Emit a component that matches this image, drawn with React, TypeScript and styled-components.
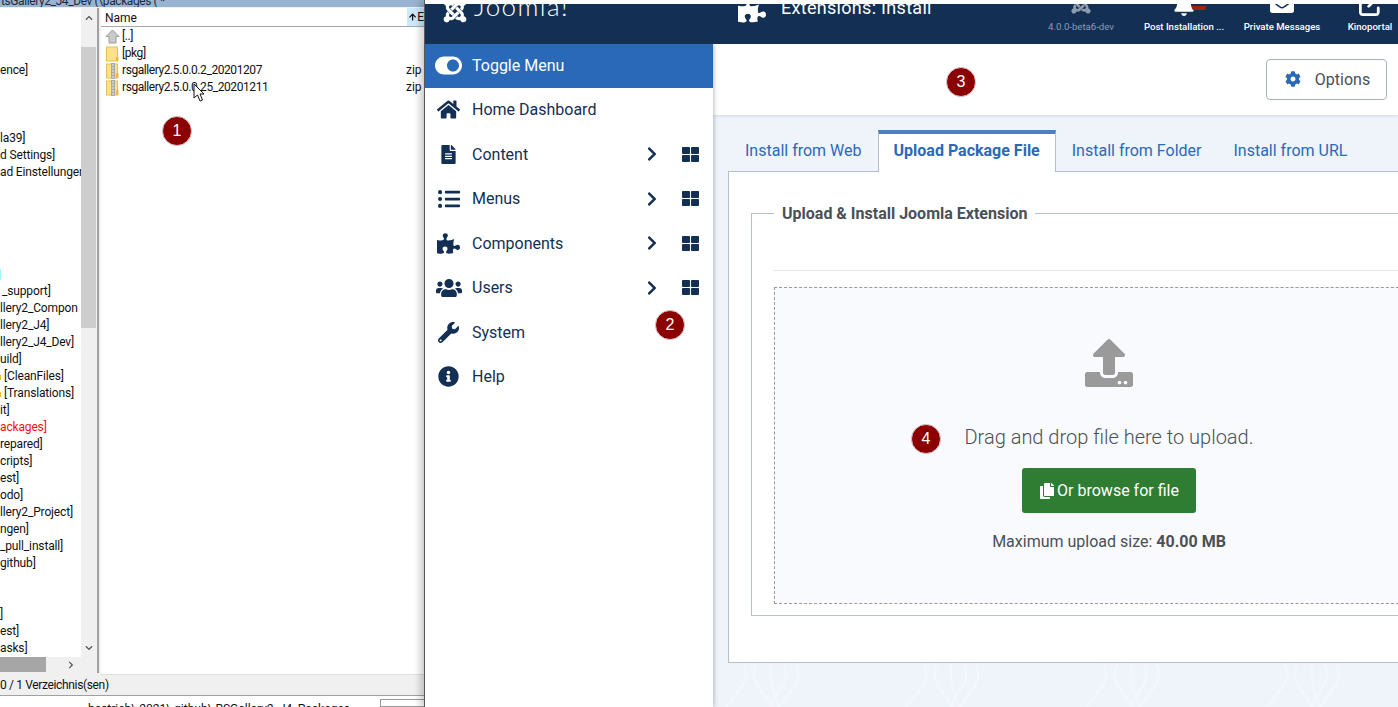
import React from "react"
import styled, { createGlobalStyle } from "styled-components"
import {
    FaArrowUp, FaBell, FaChevronRight, FaCog, FaCopy, FaEnvelopeOpen, FaFileAlt, FaHome, FaInfoCircle, FaJoomla,
    FaListUl, FaPuzzlePiece, FaThLarge, FaToggleOn, FaUpload, FaUsers, FaWrench,
} from "react-icons/fa"
import { FaArrowUpRightFromSquare } from "react-icons/fa6"

const Global = createGlobalStyle`
    html, body { margin: 0; padding: 0; height: 100%; overflow: hidden; background: #fff; }
    * { box-sizing: border-box; }
    ul { list-style: none; margin: 0; padding: 0; }
`

const Screen = styled.div`
    position: relative;
    display: flex;
    width: 1398px;
    height: 707px;
    overflow: hidden;
`

/* ---- file manager window ---- */

const Commander = styled.div`
    width: 424px;
    flex: none;
    display: flex;
    flex-direction: column;
    font-family: Roboto, "Open Sans", sans-serif;
    font-size: 12px;
    color: #111;
    background: #f0f0f0;
`

const TitleBar = styled.div`
    height: 7px;
    background: #99b4d1;
    overflow: hidden;
    line-height: 2px;
    padding-left: 1px;
    letter-spacing: -0.4px;
    white-space: nowrap;
    color: #1c2a3a;
`

const Panes = styled.div`
    display: flex;
    margin-top: 1px;
    height: 668px;
`

const TreePane = styled.div`
    width: 99px;
    flex: none;
    display: grid;
    grid-template-columns: 81px 15px;
    grid-template-rows: 649px 15px;
    border-right: 2px solid #a0a0a0;
    background: #f0f0f0;
    height: 665px;
`

const TreeList = styled.ul`
    background: #fff;
    overflow: hidden;
    padding-top: 20px;
`

const TreeRow = styled.li<{ $red?: boolean; $x?: number }>`
    height: 17px;
    line-height: 17px;
    white-space: nowrap;
    letter-spacing: -0.15px;
    padding-left: ${p => p.$x ?? 0}px;
    color: ${p => (p.$red ? "#f01010" : "#111")};
`

const CyanMark = styled.span`
    display: inline-block;
    width: 1px;
    height: 11px;
    vertical-align: middle;
    background: #9ff5ff;
`

const FolderStub = styled.span`
    display: inline-block;
    width: 1px;
    height: 5px;
    margin-right: 3px;
    vertical-align: baseline;
    background: #eeb92f;
`

const VScroll = styled.div`
    display: flex;
    flex-direction: column;
    align-items: center;
    background: #f0f0f0;
    color: #555;
`

const ScrollArrow = styled.div<{ $h: number }>`
    height: ${p => p.$h}px;
    flex: none;
    display: flex;
    align-items: center;
    justify-content: center;
`

const VThumb = styled.div`
    width: 100%;
    height: 281px;
    background: #cdcdcd;
    flex: none;
`

const HScroll = styled.div`
    display: flex;
    align-items: center;
    background: #f0f0f0;
    color: #555;
`

const HThumb = styled.div`
    width: 46px;
    height: 100%;
    background: #a6a6a6;
`

const HArrow = styled.div`
    margin-left: 21px;
    display: flex;
`

const ListPane = styled.div`
    flex: 1;
    margin-left: 2px;
    background: #fff;
    min-width: 0;
    height: 667px;
    border-bottom: 1px solid #e0e0e0;
`

const ListHeader = styled.div`
    height: 19px;
    display: flex;
    border-bottom: 1px solid #a8a8a8;
    line-height: 19px;
`

const NameCol = styled.div`
    flex: 1;
    padding: 1px 0 0 4px;
`

const SortCol = styled.div`
    width: 17px;
    background: #cce8ff;
    display: flex;
    align-items: center;
    gap: 1px;
    padding-left: 2px;
    overflow: hidden;
`

const FileList = styled.ul`
    padding-top: 1px;
`

const FileRow = styled.li`
    height: 17px;
    line-height: 17px;
    display: flex;
    align-items: center;
    white-space: nowrap;
    padding: 0 0 0 4px;
`

const FileIcon = styled.svg`
    width: 15px;
    height: 16px;
    flex: none;
    margin-right: 2px;
`

const FileName = styled.span`
    flex: 1;
    letter-spacing: -0.42px;
`

const FileExt = styled.span`
    width: 18px;
    flex: none;
`

const StatusBar = styled.div`
    height: 20px;
    line-height: 19px;
    border-bottom: 1px solid #a0a0a0;
    background: #f0f0f0;
    letter-spacing: -0.35px;
    white-space: nowrap;
`

const CommandLine = styled.div`
    flex: 1;
    background: #fff;
    display: flex;
    justify-content: space-between;
    padding-left: 88px;
    overflow: hidden;
    line-height: 17px;
    white-space: nowrap;
`

const CommandText = styled.span`
    padding-top: 5px;
`

const CommandInput = styled.div`
    width: 44px;
    flex: none;
    margin-top: 3px;
    border: 1px solid #9a9a9a;
    border-right: 0;
    background: #fff;
`

/* ---- joomla window ---- */

const Joomla = styled.div`
    flex: 1;
    min-width: 0;
    display: flex;
    flex-direction: column;
    border-left: 1px solid #5a5a5a;
    box-shadow: -5px 0 6px rgba(0, 0, 0, 0.16);
    position: relative;
    background: #fff;
    font-family: Roboto, "Noto Sans", sans-serif;
    padding-top: 4px;
`

const Header = styled.header`
    height: 40px;
    flex: none;
    background: #132f53;
    color: #fff;
    display: flex;
    overflow: hidden;
    position: relative;
`

const Logo = styled.div`
    width: 312px;
    flex: none;
    display: flex;
    align-items: flex-start;
    padding-left: 17px;
    gap: 6px;
    margin-top: -12px;
`

const LogoText = styled.span`
    font-family: Lato, "Open Sans", sans-serif;
    font-weight: 300;
    font-size: 26px;
    line-height: 28px;
    letter-spacing: 1.4px;
`

const PageTitle = styled.div`
    display: flex;
    align-items: flex-start;
    gap: 15px;
    width: 295px;
    flex: none;
    padding-left: 1px;
    margin-top: -13px;
`

const PageHeading = styled.span`
    font-size: 18px;
    line-height: 34px;
    letter-spacing: 0.3px;
    white-space: nowrap;
`

const Quick = styled.div`
    display: flex;
    flex: 1;
`

const QuickItem = styled.div<{ $w: number; $dim?: boolean }>`
    width: ${p => p.$w}px;
    flex: none;
    display: flex;
    flex-direction: column;
    align-items: center;
    justify-content: flex-end;
    height: 29px;
    font-size: 9.6px;
    font-weight: ${p => (p.$dim ? 400 : 500)};
    line-height: 13px;
    white-space: nowrap;
    color: ${p => (p.$dim ? "#8f9cae" : "#fff")};
`

const QuickIcon = styled.div<{ $gap: number }>`
    height: 23px;
    display: flex;
    align-items: flex-end;
    position: relative;
    margin-bottom: ${p => p.$gap}px;
`

const BellDot = styled.span`
    position: absolute;
    right: -11px;
    top: 12px;
    width: 14px;
    height: 4px;
    border-radius: 0 0 2px 2px;
    background: #a51f18;
`

const Body = styled.div`
    flex: 1;
    display: flex;
    min-height: 0;
`

const Sidebar = styled.nav`
    width: 288px;
    flex: none;
    background: #fff;
    color: #132f53;
    box-shadow: 1px 0 4px rgba(60, 70, 90, 0.35);
    position: relative;
    z-index: 1;
`

const MenuRow = styled.div<{ $active?: boolean }>`
    height: ${p => (p.$active ? 44 : 44.5)}px;
    display: flex;
    align-items: center;
    font-size: 16px;
    padding-bottom: 1px;
    background: ${p => (p.$active ? "#2a69b8" : "transparent")};
    color: ${p => (p.$active ? "#fff" : "#132f53")};
`

const MenuIcon = styled.span`
    width: 47px;
    flex: none;
    display: flex;
    justify-content: center;
`

const MenuLabel = styled.span`
    flex: 1;
`

const MenuChevron = styled.span`
    width: 30px;
    display: flex;
    justify-content: center;
    flex: none;
`

const MenuGrid = styled.span`
    width: 46px;
    display: flex;
    justify-content: center;
    flex: none;
`

const Main = styled.main`
    flex: 1;
    min-width: 0;
    background: #eff4fb;
    overflow: hidden;
    display: flex;
    flex-direction: column;
`

const Toolbar = styled.div`
    height: 71px;
    flex: none;
    background: #fff;
    box-shadow: 0 1px 3px rgba(60, 70, 90, 0.15);
    display: flex;
    align-items: center;
    justify-content: flex-end;
    padding: 0 11px 1px 0;
`

const OptionsButton = styled.button`
    width: 121px;
    height: 41px;
    display: flex;
    align-items: center;
    justify-content: center;
    gap: 14px;
    background: #fff;
    border: 1px solid #a9b3bf;
    border-radius: 4px;
    color: #495057;
    font: 16px Roboto, sans-serif;
    padding: 0 0 0 2px;
`

const Tabs = styled.div`
    display: flex;
    margin: 15px 0 0 16px;
    height: 42px;
    width: 760px;
    flex: none;
    position: relative;
    z-index: 1;
`

const Tab = styled.div<{ $active?: boolean }>`
    display: flex;
    align-items: center;
    padding: 0 ${p => (p.$active ? 15 : 16)}px 6px;
    font-size: 16px;
    color: #2a69b8;
    white-space: nowrap;
    font-weight: ${p => (p.$active ? 700 : 400)};
    background: ${p => (p.$active ? "#fff" : "transparent")};
    border-top: 4px solid ${p => (p.$active ? "#4d80c3" : "transparent")};
    ${p => p.$active && "border-left: 1px solid #b2bfcd; border-right: 1px solid #b2bfcd;"}
`

const Panel = styled.div`
    margin: -1px 0 0 15px;
    width: 760px;
    height: 492px;
    flex: none;
    background: #fff;
    border: 1px solid #b2bfcd;
    padding: 32px 0 0 22px;
`

const Fieldset = styled.fieldset`
    margin: 0;
    width: 720px;
    height: 412px;
    border: 1px solid #b2bfcd;
    padding: 0 22px;
    min-width: 0;
`

const Legend = styled.legend`
    font-size: 16px;
    font-weight: 700;
    color: #495057;
    padding: 0 8px;
    line-height: 19px;
`

const Rule = styled.hr`
    margin: 47px 0 16px;
    border: 0;
    border-top: 1px solid #e4e6e9;
`

const DropZone = styled.div`
    width: 670px;
    height: 317px;
    background: #f9fafd;
    border: 1px dashed #9a9a9a;
    display: flex;
    flex-direction: column;
    align-items: center;
    padding-top: 51px;
`

const DropText = styled.div`
    margin-top: 35px;
    font-size: 20px;
    font-weight: 300;
    line-height: 30px;
    color: #495057;
`

const BrowseButton = styled.button`
    margin-top: 16px;
    width: 174px;
    height: 45px;
    display: flex;
    align-items: center;
    justify-content: center;
    gap: 2px;
    background: #2e7d32;
    border: 0;
    border-radius: 3px;
    color: #fff;
    font: 16px Roboto, sans-serif;
    padding: 0;
`

const MaxSize = styled.div`
    margin-top: 17px;
    font-size: 16px;
    line-height: 24px;
    color: #495057;
`

const Backdrop = styled.svg`
    flex: 1;
    width: 100%;
    min-height: 0;
    display: block;
`

/* ---- overlays ---- */

const Badge = styled.div<{ $x: number; $y: number }>`
    position: absolute;
    left: ${p => p.$x - 15}px;
    top: ${p => p.$y - 15}px;
    width: 30px;
    height: 30px;
    border-radius: 50%;
    background: #8b0000;
    border: 1px solid #d9c4c4;
    color: #fff;
    font: 16px/28px "Liberation Sans", Arial, sans-serif;
    text-align: center;
    z-index: 5;
`

const Pointer = styled.svg`
    position: absolute;
    left: 193px;
    top: 83px;
    z-index: 4;
`

const tree: { t?: string; red?: boolean; x?: number; cyan?: boolean; stub?: boolean }[] = [
    {}, {}, { t: "ence]" }, {}, {}, {},
    { t: "la39]" }, { t: "d Settings]" }, { t: "ad Einstellunger" }, {}, {}, {}, {}, {}, { cyan: true },
    { t: "_support]", x: 2 }, { t: "llery2_Compon" }, { t: "llery2_J4]" }, { t: "llery2_J4_Dev]" }, { t: "uild]" },
    { t: "[CleanFiles]", stub: true }, { t: "[Translations]", stub: true }, { t: "it]" }, { t: "ackages]", red: true },
    { t: "repared]" }, { t: "cripts]" }, { t: "est]" }, { t: "odo]" }, { t: "llery2_Project]" }, { t: "ngen]" },
    { t: "_pull_install]" }, { t: "github]" }, {}, {}, { t: "]" }, { t: "est]" }, { t: "asks]" },
]

const FolderIcon = () => (
    <FileIcon viewBox="0 0 15 16">
        <rect x="1.5" y="1" width="11" height="14" fill="#fde08a" stroke="#e5c05a" />
        <rect x="11" y="11" width="2.5" height="4" fill="#eeb92f" />
    </FileIcon>
)

const ZipIcon = () => (
    <FileIcon viewBox="0 0 15 16">
        <rect x="1.5" y="1" width="11" height="14" fill="#fde08a" stroke="#e5c05a" />
        <rect x="6" y="0" width="4" height="16" fill="#a9a9a9" />
        <path d="M7 2h2M7 5h2M7 8h2M7 11h2M7 14h2" stroke="#eee" />
        <rect x="11" y="10" width="2.5" height="5" fill="#eeb92f" />
    </FileIcon>
)

const UpIcon = () => (
    <FileIcon viewBox="0 0 15 16">
        <path d="M7.5 1 14 7.5h-3V14H4V7.5H1z" fill="#c9c9c9" stroke="#9d9d9d" />
    </FileIcon>
)

const menu = [
    { label: "Home Dashboard", icon: <FaHome size={23} /> },
    { label: "Content", icon: <FaFileAlt size={19} />, sub: true },
    { label: "Menus", icon: <FaListUl size={22} />, sub: true },
    { label: "Components", icon: <FaPuzzlePiece size={23} />, sub: true },
    { label: "Users", icon: <FaUsers size={26} />, sub: true },
    { label: "System", icon: <FaWrench size={21} /> },
    { label: "Help", icon: <FaInfoCircle size={21} /> },
]

export default function App() {
    return (
        <Screen>
            <Global />
            <Commander>
                <TitleBar>tsGallery2_J4_Dev (\packages ( *</TitleBar>
                <Panes>
                    <TreePane>
                        <TreeList>
                            {tree.map((r, i) => (
                                <TreeRow key={i} $red={r.red} $x={r.x}>
                                    {r.cyan && <CyanMark />}
                                    {r.stub && <FolderStub />}
                                    {r.t}
                                </TreeRow>
                            ))}
                        </TreeList>
                        <VScroll>
                            <ScrollArrow $h={20}><FaChevronRight size={8} style={{ transform: "rotate(-90deg)" }} /></ScrollArrow>
                            <ScrollArrow $h={19} />
                            <VThumb />
                            <ScrollArrow $h={310} />
                            <ScrollArrow $h={19}><FaChevronRight size={8} style={{ transform: "rotate(90deg)" }} /></ScrollArrow>
                        </VScroll>
                        <HScroll>
                            <HThumb />
                            <HArrow><FaChevronRight size={8} /></HArrow>
                        </HScroll>
                    </TreePane>
                    <ListPane>
                        <ListHeader>
                            <NameCol>Name</NameCol>
                            <SortCol><FaArrowUp size={8} />E</SortCol>
                        </ListHeader>
                        <FileList>
                            <FileRow><UpIcon /><FileName>[..]</FileName></FileRow>
                            <FileRow><FolderIcon /><FileName>[pkg]</FileName></FileRow>
                            <FileRow><ZipIcon /><FileName>rsgallery2.5.0.0.2_20201207</FileName><FileExt>zip</FileExt></FileRow>
                            <FileRow><ZipIcon /><FileName>rsgallery2.5.0.0.25_20201211</FileName><FileExt>zip</FileExt></FileRow>
                        </FileList>
                    </ListPane>
                </Panes>
                <StatusBar>0 / 1 Verzeichnis(sen)</StatusBar>
                <CommandLine>
                    <CommandText>bestrieb\ 2021\ github\ RSGallery2_J4_Packages</CommandText>
                    <CommandInput />
                </CommandLine>
            </Commander>

            <Joomla>
                <Header>
                    <Logo>
                        <FaJoomla size={26} style={{ marginTop: 6 }} />
                        <LogoText>Joomla!</LogoText>
                    </Logo>
                    <PageTitle>
                        <FaPuzzlePiece size={28} style={{ marginTop: 5 }} />
                        <PageHeading>Extensions: Install</PageHeading>
                    </PageTitle>
                    <Quick>
                        <QuickItem $w={98} $dim>
                            <QuickIcon $gap={5}><FaJoomla size={22} /></QuickIcon>
                            4.0.0-beta6-dev
                        </QuickItem>
                        <QuickItem $w={108}>
                            <QuickIcon $gap={4}><FaBell size={22} /><BellDot /></QuickIcon>
                            Post Installation ...
                        </QuickItem>
                        <QuickItem $w={88}>
                            <QuickIcon $gap={7}><FaEnvelopeOpen size={24} /></QuickIcon>
                            Private Messages
                        </QuickItem>
                        <QuickItem $w={88}>
                            <QuickIcon $gap={4}><FaArrowUpRightFromSquare size={22} /></QuickIcon>
                            Kinoportal
                        </QuickItem>
                    </Quick>
                </Header>
                <Body>
                    <Sidebar>
                        <MenuRow $active>
                            <MenuIcon><FaToggleOn size={27} /></MenuIcon>
                            <MenuLabel>Toggle Menu</MenuLabel>
                        </MenuRow>
                        {menu.map(m => (
                            <MenuRow key={m.label}>
                                <MenuIcon>{m.icon}</MenuIcon>
                                <MenuLabel>{m.label}</MenuLabel>
                                {m.sub && <MenuChevron><FaChevronRight size={16} /></MenuChevron>}
                                {m.sub && <MenuGrid><FaThLarge size={17} /></MenuGrid>}
                            </MenuRow>
                        ))}
                    </Sidebar>
                    <Main>
                        <Toolbar>
                            <OptionsButton><FaCog size={16} color="#2a69b8" />Options</OptionsButton>
                        </Toolbar>
                        <Tabs>
                            <Tab>Install from Web</Tab>
                            <Tab $active>Upload Package File</Tab>
                            <Tab>Install from Folder</Tab>
                            <Tab>Install from URL</Tab>
                        </Tabs>
                        <Panel>
                            <Fieldset>
                                <Legend>Upload &amp; Install Joomla Extension</Legend>
                                <Rule />
                                <DropZone>
                                    <FaUpload size={48} color="#9a9a9a" />
                                    <DropText>Drag and drop file here to upload.</DropText>
                                    <BrowseButton><FaCopy size={16} />Or browse for file</BrowseButton>
                                    <MaxSize>Maximum upload size: <strong>40.00 MB</strong></MaxSize>
                                </DropZone>
                            </Fieldset>
                        </Panel>
                        <Backdrop viewBox="0 0 684 44" preserveAspectRatio="xMinYMin slice">
                            <defs>
                                <pattern id="waves" width="180" height="60" patternUnits="userSpaceOnUse" x="10">
                                    <path d="M20 0c4 8 4 14 0 22L0 48M34 0c-4 8-4 14 0 22l20 28M48 0c-1 14 0 26 8 44M60 0c4 8 4 14 0 22L46 44M72 0c4 8 4 14 0 22L52 50" fill="none" stroke="#f7f9fd" strokeWidth="1" />
                                </pattern>
                            </defs>
                            <rect width="684" height="44" fill="url(#waves)" />
                        </Backdrop>
                    </Main>
                </Body>
            </Joomla>

            <Pointer width="13" height="19" viewBox="0 0 13 19">
                <path d="M1 1v14l3.5-3 2.5 6 2.5-1-2.5-6H11z" fill="#fff" stroke="#111" strokeWidth="1" />
            </Pointer>
            <Badge $x={177} $y={131}>1</Badge>
            <Badge $x={670} $y={325}>2</Badge>
            <Badge $x={961} $y={82}>3</Badge>
            <Badge $x={926} $y={439}>4</Badge>
        </Screen>
    )
}
